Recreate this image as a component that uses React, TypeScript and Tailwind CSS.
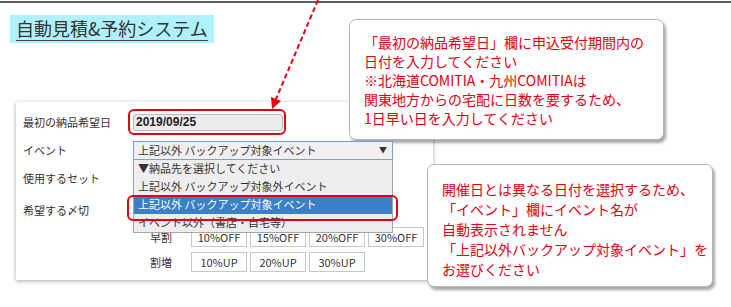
import React from 'react';

const jp = { fontFamily: '"Noto Sans CJK JP", "Noto Sans", sans-serif' };

const Callout: React.FC<{ className: string; lines: string[] }> = ({ className, lines }) => (
  <div
    className={`absolute bg-white border border-[#b5b5b5] rounded-[7px] shadow-[2px_3px_3px_rgba(0,0,0,0.35)] text-[#e50012] ${className}`}
    style={jp}
  >
    {lines.map((l) => (
      <div key={l} className="whitespace-nowrap">{l}</div>
    ))}
  </div>
);

const App: React.FC = () => {
  const offRates = ['10%OFF', '15%OFF', '20%OFF', '30%OFF'];
  const upRates = ['10%UP', '20%UP', '30%UP'];

  return (
    <div className="relative w-[731px] h-[307px] overflow-hidden bg-white" style={jp}>
      {/* top rule */}
      <div className="mt-px h-[2px] bg-[#5e5e5e]" />

      {/* Title */}
      <div className="mt-[12px] ml-[10px] inline-block bg-[#aff1fd] px-[6px] pt-[1px] pb-[2px]">
        <div className="text-[18px] leading-[24px] text-[#333] border-b border-[#444]">
          自動見積&amp;予約システム
        </div>
      </div>

      {/* Form panel */}
      <div className="ml-[16px] mt-[59px] w-[417px] h-[178px] bg-white shadow-[0_1px_4px_rgba(0,0,0,0.35)] pt-[9px] text-[11px] text-[#333]">
        <div className="flex items-center h-[22px]">
          <div className="w-[117px] pl-[7px]">最初の納品希望日</div>
          <div className="relative">
            <div
              className="w-[150px] h-[17px] bg-[#ececec] border border-[#b9b9b9] rounded-[3px] pl-[2px] flex items-center text-[12px] font-bold text-[#222]"
              style={{ fontFamily: '"Liberation Sans", Arial, sans-serif' }}
            >
              2019/09/25
            </div>
            <div className="absolute left-[-5px] top-[-5px] w-[158px] h-[26px] border-2 border-[#e50012] rounded-[6px]" />
          </div>
        </div>

        <div className="flex items-center h-[22px] mt-[6px]">
          <div className="w-[117px] pl-[7px]">イベント</div>
          <div className="relative z-10">
            <div className="w-[260px] h-[19px] bg-[#f0f0f0] border border-[#7f9fd1] flex items-center justify-between pl-[4px] pr-[5px]">
              <span>上記以外 バックアップ対象イベント</span>
              <span className="text-[8px]">▼</span>
            </div>
            <div className="absolute left-0 top-[19px] w-[260px] h-[73px] bg-[#eeeeee] border border-[#a5a5a5] border-t-0 overflow-hidden">
              <div className="h-[18px] pl-[4px] flex items-center">▼納品先を選択してください</div>
              <div className="h-[18px] pl-[4px] flex items-center">上記以外 バックアップ対象外イベント</div>
              <div className="h-[18px] pl-[4px] flex items-center bg-[#3b7fc6] text-white">上記以外 バックアップ対象イベント</div>
              <div className="h-[18px] pl-[4px] flex items-center">イベント以外（書店・自宅等）</div>
            </div>
            <div className="absolute left-[-6px] top-[54px] w-[271px] h-[26px] border-2 border-[#e50012] rounded-[6px]" />
          </div>
        </div>

        <div className="flex items-center h-[22px] mt-[6px]">
          <div className="w-[117px] pl-[7px]">使用するセット</div>
        </div>

        <div className="flex items-center h-[22px] mt-[10px]">
          <div className="w-[117px] pl-[7px]">希望する〆切</div>
        </div>

        <div className="flex items-center h-[20px] mt-[6px]">
          <div className="w-[175px] pl-[134px]">早割</div>
          <div className="flex gap-[3px]">
            {offRates.map((r) => (
              <div key={r} className="w-[56px] h-[20px] border border-[#c8c8c8] flex items-center justify-center">{r}</div>
            ))}
          </div>
        </div>

        <div className="flex items-center h-[20px] mt-[5px]">
          <div className="w-[175px] pl-[134px]">割増</div>
          <div className="flex gap-[3px]">
            {upRates.map((r) => (
              <div key={r} className="w-[56px] h-[20px] border border-[#c8c8c8] flex items-center justify-center">{r}</div>
            ))}
          </div>
        </div>
      </div>

      {/* dashed arrow */}
      <svg className="absolute left-0 top-0 pointer-events-none" width="731" height="307">
        <line x1="318" y1="0" x2="276" y2="99" stroke="#e50012" strokeWidth="2" strokeDasharray="5 3" />
        <polygon points="272,109 281,101 271,97" fill="#e50012" />
      </svg>

      <Callout
        className="left-[349px] top-[19px] w-[315px] h-[121px] pl-[14px] pt-[13px] text-[14px] leading-[19px]"
        lines={[
          '「最初の納品希望日」欄に申込受付期間内の',
          '日付を入力してください',
          '※北海道COMITIA・九州COMITIAは',
          '関東地方からの宅配に日数を要するため、',
          '1日早い日を入力してください',
        ]}
      />

      <Callout
        className="left-[427px] top-[164px] w-[286px] h-[123px] pl-[14px] pt-[14px] text-[14px] leading-[20px]"
        lines={[
          '開催日とは異なる日付を選択するため、',
          '「イベント」欄にイベント名が',
          '自動表示されません',
          '「上記以外バックアップ対象イベント」を',
          'お選びください',
        ]}
      />
    </div>
  );
};

export default App;
